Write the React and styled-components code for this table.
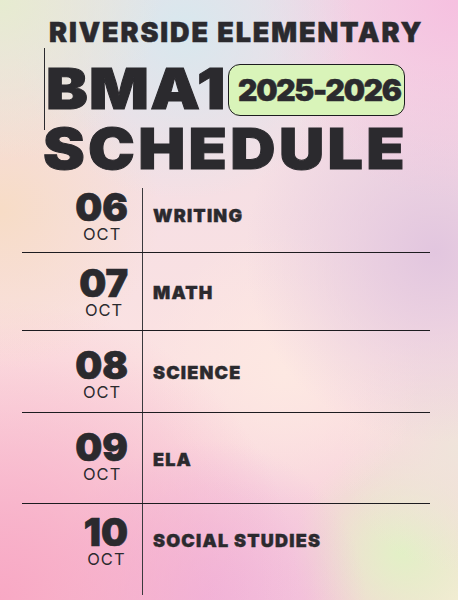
import React from 'react';
import styled, { createGlobalStyle } from 'styled-components';

const GlobalStyle = createGlobalStyle`
  html, body {
    margin: 0;
    padding: 0;
  }
  body {
    font-family: 'Inter', 'Noto Sans', sans-serif;
    color: #2b2a2e;
  }
`;

const rows = [
  { day: '06', month: 'OCT', subject: 'WRITING', h: 65, top: 4, sub: 21 },
  { day: '07', month: 'OCT', subject: 'MATH', h: 78, top: 15, sub: 33 },
  { day: '08', month: 'OCT', subject: 'SCIENCE', h: 82, top: 19, sub: 35 },
  { day: '09', month: 'OCT', subject: 'ELA', h: 91, top: 19, sub: 40 },
  { day: '10', month: 'OCT', subject: 'SOCIAL STUDIES', h: 91, top: 13, sub: 30 },
];

const Page = () => (
  <Poster>
    <School>RIVERSIDE ELEMENTARY</School>
    <TitleBlock>
      <TopLine>
        <Big $space={1}>BMA1</Big>
        <YearPill>2025-2026</YearPill>
      </TopLine>
      <Big $space={3} $pull>SCHEDULE</Big>
    </TitleBlock>
    <Table>
      {rows.map((r, i) => (
        <Row key={r.day} $h={r.h} $last={i === rows.length - 1}>
          <DateCell $top={r.top}>
            <DateStack>
              <Day>{r.day}</Day>
              <Month>{r.month}</Month>
            </DateStack>
          </DateCell>
          <Subject $top={r.sub}>{r.subject}</Subject>
        </Row>
      ))}
    </Table>
  </Poster>
);

const Poster = styled.div`
  width: 458px;
  height: 600px;
  overflow: hidden;
  box-sizing: border-box;
  padding-top: 17px;
  background:
    radial-gradient(circle at 0% 0%, #e6ecd0 0, rgba(230,236,208,0) 160px),
    radial-gradient(circle at 40% 5%, #d8e8ee 0, rgba(216,232,238,0) 170px),
    radial-gradient(circle at 100% 0%, #f6c0e0 0, rgba(246,192,224,0) 200px),
    radial-gradient(circle at 95% 42%, #e2c6df 0, rgba(226,198,223,0) 190px),
    radial-gradient(circle at 0% 35%, #f7dcc6 0, rgba(247,220,198,0) 160px),
    radial-gradient(circle at 0% 100%, #f8a8c4 0, rgba(248,168,196,0) 300px),
    radial-gradient(circle at 45% 100%, #efb6de 0, rgba(239,182,222,0) 160px),
    radial-gradient(circle at 62% 62%, #fde8e2 0, rgba(253,232,226,0) 140px),
    radial-gradient(circle at 100% 75%, #efe4da 0, rgba(239,228,218,0) 120px),
    radial-gradient(circle at 88% 92%, #e2f0c6 0, rgba(226,240,198,0) 110px),
    radial-gradient(circle at 100% 100%, #f9ebd8 0, rgba(249,235,216,0) 150px),
    linear-gradient(180deg, #f0dce6 0%, #fbe2e2 60%, #f6c8d8 100%);
`;

const School = styled.div`
  padding-left: 49px;
  font-size: 27px;
  font-weight: 900;
  letter-spacing: 1.9px;
  line-height: 31px;
  white-space: nowrap;
  -webkit-text-stroke: 0.5px #2b2a2e;
`;

const TitleBlock = styled.div`
  padding-left: 43px;
`;

const TopLine = styled.div`
  display: flex;
  align-items: center;
  gap: 18px;
  border-left: 1px solid #2b2a2e;
  margin-left: 1px;
  height: 82px;
`;

const Big = styled.div`
  font-size: 57px;
  font-weight: 900;
  line-height: 48px;
  letter-spacing: ${p => p.$space}px;
  white-space: nowrap;
  transform: scaleX(1.1);
  transform-origin: left center;
  margin-top: ${p => (p.$pull ? '-5px' : '0')};
  padding-left: ${p => (p.$pull ? '0' : '1px')};
  -webkit-text-stroke: 1px #2b2a2e;
`;

const YearPill = styled.div`
  height: 52px;
  box-sizing: border-box;
  border: 1px solid #1d1c20;
  border-radius: 12px;
  background: #d9f4b9;
  padding: 0 3px 0 9px;
  margin-top: 2px;
  display: flex;
  align-items: center;
  font-size: 30px;
  font-weight: 900;
  letter-spacing: -1.3px;
  -webkit-text-stroke: 0.5px #2b2a2e;
`;

const Table = styled.div`
  margin-top: 15px;
  margin-left: 22px;
  width: 408px;
`;

const Row = styled.div`
  display: flex;
  height: ${p => p.$h}px;
  box-sizing: border-box;
  border-bottom: ${p => (p.$last ? 'none' : '1px solid #1d1c20')};
`;

const DateCell = styled.div`
  width: 121px;
  box-sizing: border-box;
  border-right: 1.5px solid #3a393d;
  display: flex;
  justify-content: flex-end;
  padding-right: 14px;
  padding-top: ${p => p.$top}px;
`;

const DateStack = styled.div`
  display: flex;
  flex-direction: column;
  align-items: center;
`;

const Day = styled.div`
  font-size: 38px;
  font-weight: 900;
  line-height: 30px;
  height: 31px;
  -webkit-text-stroke: 0.7px #2b2a2e;
`;

const Month = styled.div`
  font-size: 16.5px;
  font-weight: 400;
  line-height: 18px;
  margin-top: 2px;
  letter-spacing: 1px;
  padding-left: 1px;
`;

const Subject = styled.div`
  padding-left: 10px;
  padding-top: ${p => p.$top}px;
  font-size: 18px;
  font-weight: 900;
  line-height: 14px;
  letter-spacing: 1.2px;
  white-space: nowrap;
  -webkit-text-stroke: 0.4px #2b2a2e;
`;

export default function App() {
  return (
    <>
      <GlobalStyle />
      <Page />
    </>
  );
}
